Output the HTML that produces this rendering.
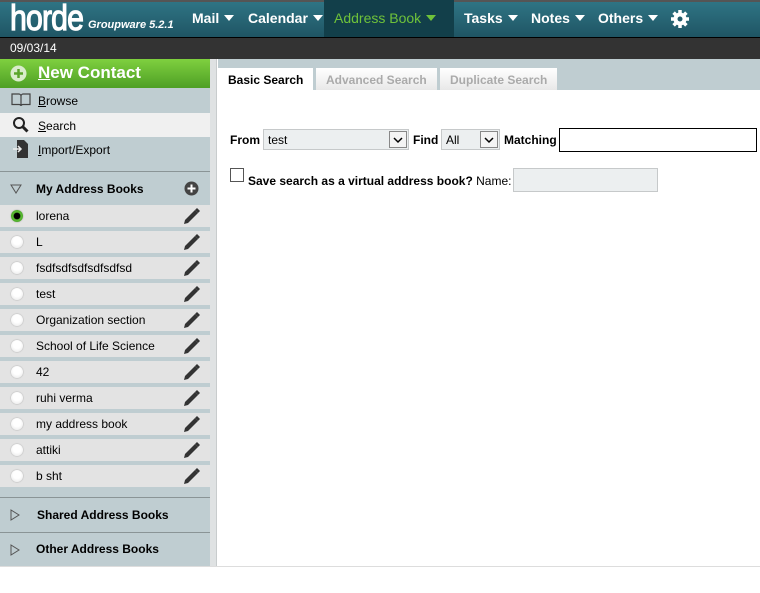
<!DOCTYPE html>
<html><head><meta charset="utf-8"><style>
*{margin:0;padding:0;box-sizing:border-box}
body{width:760px;height:593px;background:#fff;font-family:"Liberation Sans",Arial,sans-serif;font-size:12px;position:relative;overflow:hidden;color:#000}
.a{position:absolute}
#top{left:0;top:0;width:760px;height:37px;background:linear-gradient(#2f7484,#1f5564);border-top:2px solid #555}
.logo{left:10px;top:-3px;color:#fff;font-size:36px;font-weight:normal;-webkit-text-stroke:1.2px #fff;letter-spacing:-1px;transform:scaleX(.84);transform-origin:left top}
.gw{left:88px;top:19px;color:#fff;font-size:11px;font-weight:bold;font-style:italic}
.nav{top:10px;color:#fff;font-size:14px;font-weight:bold}
.tri{display:inline-block;width:0;height:0;border-left:5px solid transparent;border-right:5px solid transparent;border-top:6px solid #fff;margin-left:5px;vertical-align:2px}
#ab{left:324px;top:0;width:130px;height:37px;background:#123f4a}
#date{left:0;top:37px;width:760px;height:22px;background:#333;border-top:1px solid #000;color:#fff;font-size:12px;padding:3px 0 0 10px}
#side{left:0;top:59px;width:210px;height:507px;background:#bfcdd1}
#div{left:210px;top:59px;width:7px;height:507px;background:#dfe2e3;border-right:1px solid #c8cccd}
#nc{left:0;top:59px;width:210px;height:29px;background:linear-gradient(#7fd03f,#4e9f25);color:#fff;font-size:17px;font-weight:bold}
.mi{left:0;width:210px;height:24px;font-size:12px}
.mi span{position:absolute;left:38px;top:6px}
.row{left:0;width:210px;height:22px;background:#e3e3e3}
.row span{position:absolute;left:36px;top:4px}
.rad{position:absolute;left:11px;top:5px;width:12px;height:12px;border-radius:50%;background:radial-gradient(circle at 50% 40%,#fff 40%,#e4e4e4);box-shadow:0 0 1.5px #999}
.hd{left:0;width:210px;font-weight:bold;font-size:12px}
#tabs{left:218px;top:59px;width:542px;height:31px;background:#bfcdd1}
.tab{top:68px;height:22px;font-weight:bold;font-size:12px;padding:5px 0 0 10px;background:linear-gradient(#fff,#e8e8e8);color:#aaa}
.sel{background:#eceff0;border:1px solid #c6c9ca}
.dd{position:absolute;right:1px;top:1px;width:18px;height:17px;border:1px solid #888;background:#f4f4f4}
</style></head><body>
<div id="top" class="a"></div>
<div id="ab" class="a"></div>
<div class="a logo">horde</div>
<div class="a gw">Groupware 5.2.1</div>
<div class="a nav" style="left:192px">Mail<i class="tri"></i></div>
<div class="a nav" style="left:248px">Calendar<i class="tri"></i></div>
<div class="a nav" style="left:334px;color:#6fc23a;font-weight:normal">Address Book<i class="tri" style="border-top-color:#6fc23a"></i></div>
<div class="a nav" style="left:464px">Tasks<i class="tri"></i></div>
<div class="a nav" style="left:531px">Notes<i class="tri"></i></div>
<div class="a nav" style="left:598px">Others<i class="tri"></i></div>
<svg class="a" style="left:670px;top:9px" width="20" height="20" viewBox="0 0 20 20"><g fill="#fff"><circle cx="10" cy="10" r="6.5"/><g stroke="#fff" stroke-width="3.5"><path d="M10 1v18M1 10h18M3.6 3.6l12.8 12.8M16.4 3.6L3.6 16.4"/></g></g><circle cx="10" cy="10" r="2.5" fill="#215a69"/></svg>
<div id="date" class="a">09/03/14</div>
<div id="side" class="a"></div>
<div id="div" class="a"></div>
<div id="nc" class="a"><svg class="a" style="left:10px;top:6px" width="17" height="17"><circle cx="8.5" cy="8.5" r="8" fill="#d9eccc"/><path d="M8.5 4v9M4 8.5h9" stroke="#5aa52b" stroke-width="2.5"/></svg><span class="a" style="left:38px;top:4px"><u>N</u>ew Contact</span></div>
<div class="a mi" style="top:88px"><svg class="a" style="left:11px;top:4px" width="20" height="16" viewBox="0 0 20 16"><path d="M1 2h7c1 0 2 1 2 2v10c0-1-1-1.5-2-1.5H1zM19 2h-7c-1 0-2 1-2 2v10c0-1 1-1.5 2-1.5h7z" fill="none" stroke="#444" stroke-width="1.2"/></svg><span><u>B</u>rowse</span></div>
<div class="a mi" style="top:113px;background:#f0f0f0"><svg class="a" style="left:12px;top:3px" width="18" height="18"><circle cx="7" cy="7" r="5" fill="none" stroke="#222" stroke-width="2"/><path d="M10.5 10.5l5 5" stroke="#222" stroke-width="3"/></svg><span><u>S</u>earch</span></div>
<div class="a mi" style="top:137px"><svg class="a" style="left:12px;top:2px" width="18" height="20"><path d="M5 1h7l4 4v14H5z" fill="#333"/><path d="M1 10h8M6 7l3 3-3 3" stroke="#eee" stroke-width="1.5" fill="none"/></svg><span><u>I</u>mport/Export</span></div>
<div class="a" style="left:0;top:171px;width:210px;height:1px;background:#8a9496"></div>
<div class="a hd" style="top:182px"><svg class="a" style="left:10px;top:2px" width="12" height="10"><path d="M1 1h10L6 9z" fill="none" stroke="#555"/></svg><span class="a" style="left:36px">My Address Books</span><svg class="a" style="left:184px;top:-1px" width="15" height="15"><circle cx="7.5" cy="7.5" r="7" fill="#444"/><path d="M7.5 3.5v8M3.5 7.5h8" stroke="#fff" stroke-width="2"/></svg></div>
<div class="a row" style="top:205px"><i class="rad" style="background:radial-gradient(#000 35%,#5cc034 45%,#3a8a20);"></i><span>lorena</span></div>
<div class="a row" style="top:231px"><i class="rad"></i><span>L</span></div>
<div class="a row" style="top:257px"><i class="rad"></i><span>fsdfsdfsdfsdfsdfsd</span></div>
<div class="a row" style="top:283px"><i class="rad"></i><span>test</span></div>
<div class="a row" style="top:309px"><i class="rad"></i><span>Organization section</span></div>
<div class="a row" style="top:335px"><i class="rad"></i><span>School of Life Science</span></div>
<div class="a row" style="top:361px"><i class="rad"></i><span>42</span></div>
<div class="a row" style="top:387px"><i class="rad"></i><span>ruhi verma</span></div>
<div class="a row" style="top:413px"><i class="rad"></i><span>my address book</span></div>
<div class="a row" style="top:439px"><i class="rad"></i><span>attiki</span></div>
<div class="a row" style="top:465px"><i class="rad"></i><span>b sht</span></div>
<svg class="a" style="left:182px;top:207px" width="18" height="280">
<defs><g id="p"><path d="M2 17l1-4 10-10 3 3-10 10z" fill="#333"/><path d="M13 3l2-2 3 3-2 2z" fill="#333"/></g></defs>
<use href="#p" y="0"/><use href="#p" y="26"/><use href="#p" y="52"/><use href="#p" y="78"/><use href="#p" y="104"/><use href="#p" y="130"/><use href="#p" y="156"/><use href="#p" y="182"/><use href="#p" y="208"/><use href="#p" y="234"/><use href="#p" y="260"/></svg>
<div class="a" style="left:0;top:497px;width:210px;height:1px;background:#8a9496"></div>
<div class="a hd" style="top:508px"><svg class="a" style="left:10px;top:1px" width="10" height="12"><path d="M1 1v10l8-5z" fill="none" stroke="#555"/></svg><span class="a" style="left:37px">Shared Address Books</span></div>
<div class="a" style="left:0;top:532px;width:210px;height:1px;background:#8a9496"></div>
<div class="a hd" style="top:542px"><svg class="a" style="left:10px;top:2px" width="10" height="12"><path d="M1 1v10l8-5z" fill="none" stroke="#555"/></svg><span class="a" style="left:36px">Other Address Books</span></div>
<div class="a" style="left:0;top:566px;width:760px;height:1px;background:#ddd"></div>
<div id="tabs" class="a"></div>
<div class="a tab" style="left:218px;width:95px;background:#fff;color:#000">Basic Search</div>
<div class="a tab" style="left:316px;width:121px">Advanced Search</div>
<div class="a tab" style="left:440px;width:117px">Duplicate Search</div>
<div class="a" style="left:230px;top:133px;font-weight:bold">From</div>
<div class="a sel" style="left:263px;top:129px;width:146px;height:21px"><span class="a" style="left:4px;top:3px">test</span><span class="dd"><svg width="16" height="15" style="position:absolute;left:0;top:0"><path d="M4 6l4 4 4-4" fill="none" stroke="#000" stroke-width="1.5"/></svg></span></div>
<div class="a" style="left:413px;top:133px;font-weight:bold">Find</div>
<div class="a sel" style="left:441px;top:129px;width:59px;height:21px"><span class="a" style="left:4px;top:3px">All</span><span class="dd"><svg width="16" height="15" style="position:absolute;left:0;top:0"><path d="M4 6l4 4 4-4" fill="none" stroke="#000" stroke-width="1.5"/></svg></span></div>
<div class="a" style="left:504px;top:133px;font-weight:bold">Matching</div>
<div class="a" style="left:559px;top:128px;width:198px;height:24px;border:1px solid #000;background:#fff"></div>
<div class="a" style="left:230px;top:168px;width:14px;height:14px;border:1px solid #555;background:#fff"></div>
<div class="a" style="left:248px;top:174px;font-weight:bold">Save search as a virtual address book? <span style="font-weight:normal">Name:</span></div>
<div class="a sel" style="left:513px;top:168px;width:145px;height:24px"></div>
</body></html>
